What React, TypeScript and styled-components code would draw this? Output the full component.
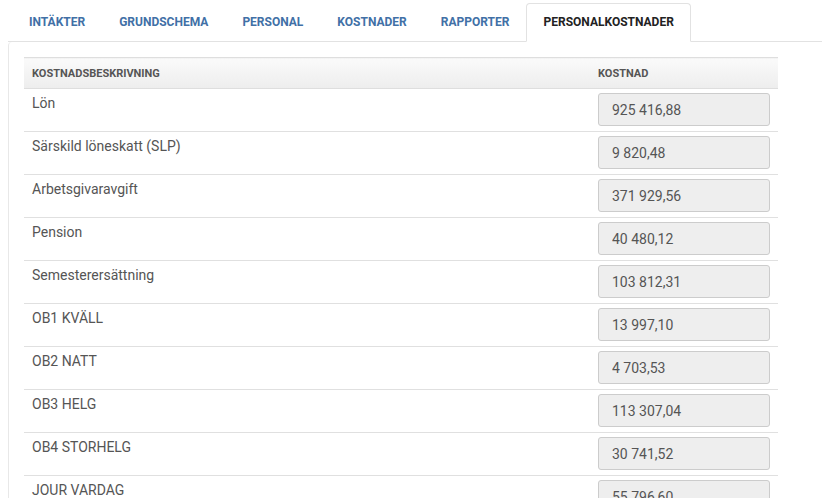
import React from 'react'
import styled, { createGlobalStyle } from 'styled-components'

const GlobalStyle = createGlobalStyle`
  html, body {
    margin: 0;
    padding: 0;
    background: #fff;
    font-family: Roboto, "Liberation Sans", Arial, sans-serif;
    overflow: hidden;
  }
`

const tabs = ['Intäkter', 'Grundschema', 'Personal', 'Kostnader', 'Rapporter', 'Personalkostnader']

const costs = [
  { name: 'Lön', value: '925 416,88' },
  { name: 'Särskild löneskatt (SLP)', value: '9 820,48' },
  { name: 'Arbetsgivaravgift', value: '371 929,56' },
  { name: 'Pension', value: '40 480,12' },
  { name: 'Semesterersättning', value: '103 812,31' },
  { name: 'OB1 KVÄLL', value: '13 997,10' },
  { name: 'OB2 NATT', value: '4 703,53' },
  { name: 'OB3 HELG', value: '113 307,04' },
  { name: 'OB4 STORHELG', value: '30 741,52' },
  { name: 'JOUR VARDAG', value: '55 796,60' },
  { name: 'JOUR HELG', value: '21 118,40' },
]

export default function App() {
  return (
    <StyledPage>
      <GlobalStyle />
      <StyledTabBar>
        {tabs.map((t) => (
          <StyledTab key={t} $active={t === 'Personalkostnader'}>
            {t}
          </StyledTab>
        ))}
      </StyledTabBar>
      <StyledPanel>
        <StyledTable>
          <thead>
            <tr>
              <StyledHeadCell>Kostnadsbeskrivning</StyledHeadCell>
              <StyledHeadCell $narrow>Kostnad</StyledHeadCell>
            </tr>
          </thead>
          <tbody>
            {costs.map((c) => (
              <tr key={c.name}>
                <StyledLabelCell>{c.name}</StyledLabelCell>
                <StyledValueCell>
                  <StyledInput readOnly value={c.value} />
                </StyledValueCell>
              </tr>
            ))}
          </tbody>
        </StyledTable>
      </StyledPanel>
    </StyledPage>
  )
}

const StyledPage = styled.div`
  padding-left: 8px;
`

const StyledTabBar = styled.ul`
  display: flex;
  margin: 0;
  padding: 3px 0 0 4px;
  list-style: none;
  border-bottom: 1px solid #e2e2e2;
`

const StyledTab = styled.li<{ $active?: boolean }>`
  height: 37px;
  line-height: 36px;
  padding: 0 16px;
  margin-bottom: -1px;
  border: 1px solid ${(p) => (p.$active ? '#e2e2e2' : 'transparent')};
  border-bottom-color: ${(p) => (p.$active ? '#fff' : 'transparent')};
  border-radius: 4px 4px 0 0;
  background: ${(p) => (p.$active ? '#fff' : 'transparent')};
  color: ${(p) => (p.$active ? '#222' : '#4170a6')};
  font-size: 12px;
  font-weight: 700;
  text-transform: uppercase;
  cursor: pointer;
`

const StyledPanel = styled.div`
  border-left: 1px solid #e8e8e8;
  border-top-left-radius: 4px;
  padding: 15px 44px 0 15px;
`

const StyledTable = styled.table`
  width: 754px;
  border-collapse: collapse;
  color: #555;
`

const StyledHeadCell = styled.th<{ $narrow?: boolean }>`
  width: ${(p) => (p.$narrow ? '172px' : 'auto')};
  height: 30px;
  padding: 0 8px;
  text-align: left;
  vertical-align: middle;
  font-size: 11px;
  font-weight: 700;
  text-transform: uppercase;
  color: #555;
  background: linear-gradient(to bottom, #fafafa, #ededed);
  border-top: 1px solid #dedede;
  border-bottom: 1px solid #dedede;
`

const StyledLabelCell = styled.td`
  padding: 4px 8px 0;
  vertical-align: top;
  font-size: 14px;
  line-height: 20px;
  border-bottom: 1px solid #e0e0e0;
`

const StyledValueCell = styled.td`
  padding: 4px 8px 5px;
  vertical-align: top;
  border-bottom: 1px solid #e0e0e0;
`

const StyledInput = styled.input`
  box-sizing: border-box;
  display: block;
  width: 100%;
  height: 33px;
  padding: 0 13px;
  border: 1px solid #cccccc;
  border-radius: 3px;
  background: #eeeeee;
  color: #555;
  font-family: Roboto, "Liberation Sans", Arial, sans-serif;
  font-size: 14px;
  outline: none;
`
